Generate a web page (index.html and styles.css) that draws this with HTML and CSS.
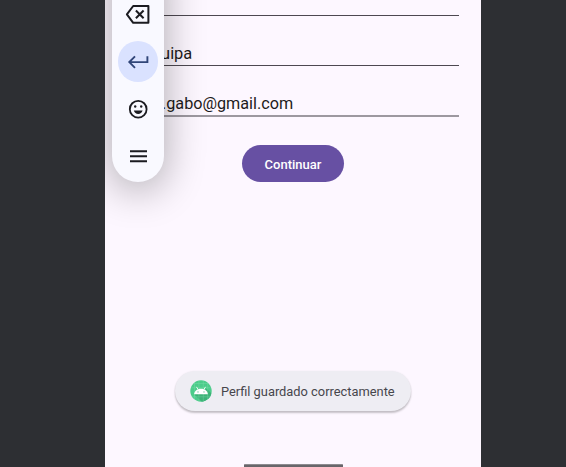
FILE: index.html
```html
<!DOCTYPE html>
<html lang="es">
<head>
<meta charset="utf-8">
<title>Perfil</title>
<link rel="stylesheet" href="styles.css">
</head>
<body>
<main class="phone">
  <form class="form">
    <div class="field field-first"></div>
    <div class="field"><span>Arequipa</span></div>
    <div class="field field-email"><span>.gabo@gmail.com</span></div>
    <button class="submit" type="button">Continuar</button>
  </form>
  <div class="toast" role="status">
    <svg class="app-icon" viewBox="0 0 22 22">
      <defs><clipPath id="disc"><circle cx="11" cy="11" r="10.7"/></clipPath></defs>
      <g clip-path="url(#disc)">
        <rect width="22" height="22" fill="#4dcc8b"/>
        <path d="M4.2 14.2L12 22h10V14l-5-5z" fill="#3db277"/>
        <path d="M4.5 0v22M8.9 0v22M13.3 0v22M17.7 0v22M0 3.5h22M0 7.8h22M0 16.8h22" stroke="#8be2b4" stroke-width=".5" opacity=".6"/>
        <path d="M6.4 6.8l1.7 2.6M15.6 6.8l-1.7 2.6" stroke="#fff" stroke-width=".9"/>
        <path d="M4.1 14.3C4.5 10.8 7.2 8.7 11 8.7s6.5 2.1 6.9 5.6z" fill="#fff"/>
        <circle cx="8" cy="11.9" r=".6" fill="#4dbb88"/><circle cx="14" cy="11.9" r=".6" fill="#4dbb88"/>
      </g>
    </svg>
    <span>Perfil guardado correctamente</span>
  </div>
  <div class="home-bar"></div>
  <nav class="keyboard-bar">
    <div class="key"><svg viewBox="0 0 28 28"><path d="M9.2 6H24.4V22.8H9.2L2.9 14.4Z" fill="none" stroke="#1b1b20" stroke-width="2" stroke-linejoin="round"/><path d="M11.9 10.5l7.7 7.7M19.6 10.5l-7.7 7.7" stroke="#1b1b20" stroke-width="2"/></svg></div>
    <div class="key key-enter"><svg viewBox="0 0 28 28"><path d="M23.4 8.2V14.1H5.5M11 8.4L5.3 14.1L11 19.8" fill="none" stroke="#304578" stroke-width="1.9"/></svg></div>
    <div class="key"><svg viewBox="0 0 28 28"><circle cx="14.2" cy="14.2" r="8.4" fill="none" stroke="#1b1b20" stroke-width="1.8"/><path d="M9.8 15.6h8.8c-.7 2.2-2.3 3.4-4.4 3.4s-3.7-1.2-4.4-3.4z" fill="#1b1b20"/><circle cx="11.2" cy="11.5" r="1.2" fill="#1b1b20"/><circle cx="17.2" cy="11.5" r="1.2" fill="#1b1b20"/></svg></div>
    <div class="key"><svg viewBox="0 0 28 28"><path d="M6 9.3h17M6 14.3h17M6 19.3h17" stroke="#1b1b20" stroke-width="2"/></svg></div>
  </nav>
</main>
</body>
</html>
```
FILE: styles.css
```css
* { box-sizing: border-box; }

body {
  margin: 0;
  height: 467px;
  overflow: hidden;
  background: #2d2f33;
  font-family: Roboto, sans-serif;
}

.phone {
  position: relative;
  display: flex;
  flex-direction: column;
  align-items: center;
  width: 376px;
  height: 467px;
  margin-left: 105px;
  overflow: hidden;
  background: #fdf7ff;
}

.form {
  display: flex;
  flex: none;
  flex-direction: column;
  align-items: center;
  width: 100%;
  padding: 0 22px;
}

.field {
  display: flex;
  align-items: flex-end;
  width: 100%;
  height: 50px;
  padding-bottom: 1px;
  border-bottom: 1px solid #4d4851;
  color: #1d1b20;
  font-size: 16.4px;
  line-height: 20px;
  white-space: nowrap;
}

.field-first { height: 16px; }

.field-email {
  height: 51px;
  padding-left: 35px;
  border-bottom: 2px solid #9d98a0;
  font-size: 16.2px;
}

.submit {
  width: 102px;
  height: 37px;
  margin-top: 28px;
  padding: 2px 0 0;
  border: 0;
  border-radius: 19px;
  background: #6750a3;
  color: #fff;
  font: 500 13px/18px Roboto, sans-serif;
}

.toast {
  display: flex;
  flex: none;
  align-items: center;
  gap: 9px;
  width: 236px;
  height: 40px;
  margin-top: 189px;
  padding: 0 0 0 15px;
  border-radius: 20px;
  background: #eeedf3;
  box-shadow: 0 2px 2px rgba(0, 0, 0, .22), 0 0 2px rgba(0, 0, 0, .07);
  color: #46464c;
  font-size: 12.85px;
  white-space: nowrap;
}

.toast span { padding-top: 1px; }

.app-icon { flex: none; width: 22px; height: 22px; }

.home-bar {
  flex: none;
  width: 99px;
  height: 5px;
  margin-top: 53px;
  border-radius: 1px;
  border-top: 1px solid #8d8a8f;
  background: #68656a;
}

/* Floating keyboard toolbar over the form */
.keyboard-bar {
  position: absolute;
  top: -60px;
  left: 7px;
  display: flex;
  flex-direction: column;
  align-items: center;
  gap: 6.9px;
  width: 52px;
  height: 242px;
  padding-top: 54px;
  border-radius: 26px;
  background: #f9f9ff;
  box-shadow: 0 8px 40px rgba(0, 0, 0, .33);
}

.key {
  display: flex;
  flex: none;
  align-items: center;
  justify-content: center;
  width: 40.5px;
  height: 40.5px;
  border-radius: 50%;
}

.key-enter { background: #dae2ff; }
.key svg { width: 28px; height: 28px; }
```
